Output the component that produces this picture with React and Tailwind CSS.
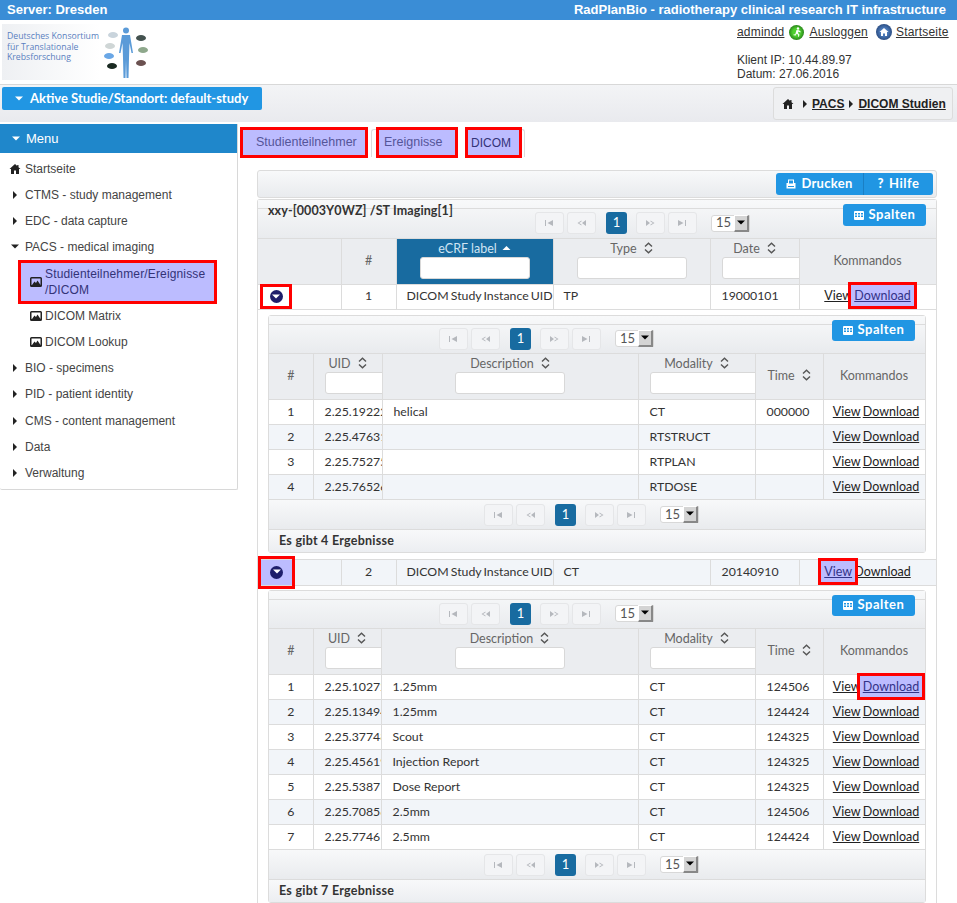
import React from "react";

const HOME = "M6 1 L0.5 6 H2 V11 H5 V7.5 H7 V11 H10 V6 H11.5 L9.5 4.2 V2 H8.2 V3 Z";

function HomeIcon({ className = "" }) {
  return (
    <svg viewBox="0 0 12 12" className={`w-3 h-3 shrink-0 ${className}`} fill="currentColor">
      <path d={HOME} />
    </svg>
  );
}

function TriangleRight() {
  return (
    <svg viewBox="0 0 6 10" className="w-[6px] h-[10px] shrink-0 text-[#222]" fill="currentColor">
      <path d="M1 1 L5 5 L1 9 Z" />
    </svg>
  );
}

function TriangleDown({ className = "text-white" }) {
  return (
    <svg viewBox="0 0 10 6" className={`w-[10px] h-[6px] shrink-0 ${className}`} fill="currentColor">
      <path d="M1 0.5 H9 L5 4.5 Z" />
    </svg>
  );
}

function ImageIcon() {
  return (
    <svg viewBox="0 0 12 10" className="w-[12px] h-[10px] shrink-0 text-[#222]" fill="currentColor">
      <path fillRule="evenodd" d="M1.5 0 H10.5 A1.5 1.5 0 0 1 12 1.5 V8.5 A1.5 1.5 0 0 1 10.5 10 H1.5 A1.5 1.5 0 0 1 0 8.5 V1.5 A1.5 1.5 0 0 1 1.5 0 Z M1.5 1.5 V8 H2 L4.5 4.5 L6 6 L7.5 3.5 L10.5 8 V1.5 Z" />
    </svg>
  );
}

function SortIcon() {
  return (
    <svg viewBox="0 0 9 12" className="inline-block w-[9px] h-[12px] ml-[7px] align-[-1px] text-[#555]" fill="none" stroke="currentColor" strokeWidth="1.4">
      <path d="M1 4.5 L4.5 1.2 L8 4.5 M1 7.5 L4.5 10.8 L8 7.5" />
    </svg>
  );
}

function PrintIcon() {
  return (
    <svg viewBox="0 0 10 10" className="w-[10px] h-[10px] text-white" fill="currentColor">
      <path fillRule="evenodd" d="M2 0.5 H8 V4 H9.5 V9.5 H0.5 V4 H2 Z M3 1.5 V4.5 H7 V1.5 Z M2 7 V8 H8 V7 Z" />
    </svg>
  );
}

function GridIcon() {
  return (
    <svg viewBox="0 0 10 9" className="w-[10px] h-[9px] text-white" fill="currentColor">
      <path fillRule="evenodd" d="M1 0 H9 A1 1 0 0 1 10 1 V8 A1 1 0 0 1 9 9 H1 A1 1 0 0 1 0 8 V1 A1 1 0 0 1 1 0 Z M1 2 V3.5 H3 V2 Z M4 2 V3.5 H6 V2 Z M7 2 V3.5 H9 V2 Z M1 4.5 V6 H3 V4.5 Z M4 4.5 V6 H6 V4.5 Z M7 4.5 V6 H9 V4.5 Z" />
    </svg>
  );
}

function PagerGlyph({ type }) {
  const paths = {
    first: "M1 2 H2 V8 H1 Z M9 2 V8 L3.5 5 Z",
    prev: "M10 2 V8 L6 5 Z M5.5 2.5 L1.5 5 L5.5 7.5 V6.6 L3 5 L5.5 3.4 Z",
    next: "M1 2 V8 L5 5 Z M5.5 2.5 L9.5 5 L5.5 7.5 V6.6 L8 5 L5.5 3.4 Z",
    last: "M1 2 V8 L6.5 5 Z M8 2 H9 V8 H8 Z",
  };
  return (
    <svg viewBox="0 0 11 10" className="w-[11px] h-[10px] text-[#b5b8bd]" fill="currentColor">
      <path d={paths[type]} />
    </svg>
  );
}

function Logo() {
  const blobs = [
    [113, 35, "#c9d4dc"],
    [141, 38, "#43524f"],
    [110, 46, "#cfd6d6"],
    [143, 50, "#8ea88c"],
    [109, 56, "#6aa7e6"],
    [141, 63, "#6b5150"],
    [112, 66, "#1a2a22"],
  ];
  return (
    <div className="relative w-[160px] h-[56px] ml-[2px] mt-[4px]">
      <div className="w-[98px] h-[56px] bg-gradient-to-r from-[#eef0f3] to-white pl-[5px] pt-[7px] text-[8.7px] leading-[10.5px] whitespace-nowrap text-[#5a7fc0] font-['Open_Sans',sans-serif]">
        <p>Deutsches Konsortium</p>
        <p>für Translationale</p>
        <p>Krebsforschung</p>
      </div>
      <svg viewBox="100 24 60 56" className="absolute left-[98px] top-0 w-[60px] h-[56px]">
        {blobs.map(([cx, cy, c]) => (
          <ellipse key={cx + "-" + cy} cx={cx} cy={cy} rx="5" ry="3" fill={c} />
        ))}
        <circle cx="126" cy="30.5" r="3" fill="#5b9bd8" />
        <path d="M122 35 H130 L133 53 H131.5 L129.5 43 L129 58 L128.5 78 H126.5 L126 60 L125.5 78 H123.5 L123 58 L122.5 43 L120.5 53 H119 Z" fill="#5b9bd8" />
      </svg>
    </div>
  );
}

function PagerBtn({ type }) {
  return (
    <span className="w-[29px] h-[22px] mr-[3px] flex items-center justify-center rounded-[3px] border border-[#e5e6e8] bg-[#f3f4f6]">
      <PagerGlyph type={type} />
    </span>
  );
}

function Pager({ className = "" }) {
  return (
    <div className={`flex items-center ${className}`}>
      <PagerBtn type="first" />
      <PagerBtn type="prev" />
      <span className="w-[21px] h-[22px] ml-[7px] mr-[9px] flex items-center justify-center rounded-[3px] bg-[#186ba0] text-white text-[13px]">1</span>
      <PagerBtn type="next" />
      <PagerBtn type="last" />
      <span className="ml-[11px] w-[39px] h-[17px] flex items-center bg-white border border-[#d8d8d8] rounded-l-[3px] text-[13px] text-[#555] pl-[4px]">
        <span className="flex-1">15</span>
        <span className="w-[15px] h-[17px] flex items-center justify-center bg-[#d4d4d4] border-r-2 border-b-2 border-[#888] border-t border-l border-t-white border-l-white">
          <TriangleDown className="text-black w-[7px] h-[4px]" />
        </span>
      </span>
    </div>
  );
}

function BlueButton({ icon, children, className = "" }) {
  return (
    <span className={`inline-flex items-center justify-center gap-[5px] rounded-[3px] bg-[#2196e3] text-white font-bold text-[13px] ${className}`}>
      {icon}
      {children}
    </span>
  );
}

function RowLink({ children, mark = false }) {
  return (
    <a
      className={
        mark
          ? "underline text-[12.5px] text-[#333388] bg-[#bcbcff] outline-[3px] outline-solid outline-[#ff0000] px-[3px] -mx-[3px] py-[3px] relative z-10"
          : "underline text-[12.5px] text-[#222]"
      }
    >
      {children}
    </a>
  );
}

const cellBorder = "border-r border-b border-[#dcdcdc]";

function HeadCell({ col }) {
  return (
    <th className={`${cellBorder} ${col.active ? "bg-[#186ba0] text-[#cfe4f3]" : "bg-[#ebedf0] text-[#666]"} font-normal text-[12.5px] p-0 overflow-hidden align-middle`}>
      <div className="leading-[16px] whitespace-nowrap">
        {col.label}
        {col.sort && <SortIcon />}
        {col.active && (
          <svg viewBox="0 0 9 6" className="inline-block w-[9px] h-[6px] ml-[5px] align-[2px] text-white" fill="currentColor">
            <path d="M0.5 5 H8.5 L4.5 1 Z" />
          </svg>
        )}
      </div>
      {col.input && (
        <input
          readOnly
          className={`block w-[110px] h-[22px] mb-[2px] bg-white border border-[#d8d8d8] rounded-[3px] ${col.input === "clip" ? "ml-[11px]" : "mx-auto"}`}
        />
      )}
    </th>
  );
}

function PanelHead({ title, pagerClass, btnClass, rowClass = "h-[38px]" }) {
  return (
    <div className="bg-gradient-to-b from-[#f8f9fa] to-[#e9ebee] border-b border-[#dcdcdc]">
      <div className="h-[9px] border-b border-[#dcdcdc]" />
      <div className={`${rowClass} flex items-start -mt-[10px] relative`}>
        {title && <b className="absolute left-[10px] top-[3px] text-[12.5px] tracking-[0.1px] text-[#333] whitespace-nowrap">{title}</b>}
        <Pager className={pagerClass} />
        <BlueButton icon={<GridIcon />} className={btnClass}>Spalten</BlueButton>
      </div>
    </div>
  );
}

function SubTable({ rows, markRow, uidCol = "w-[69px]", descCol = "w-[256px]" }) {
  return (
    <div className="border border-[#dcdcdc] rounded-[3px]">
      <PanelHead pagerClass="ml-[170px] mt-[13px]" btnClass="ml-auto mr-[10px] mt-[5px] w-[83px] h-[21px] tracking-[0.5px]" />
      <table className="table-fixed border-collapse w-[656px] text-[12.3px] text-[#333]">
        <colgroup>
          <col className="w-[44px]" />
          <col className={uidCol} />
          <col className={descCol} />
          <col className="w-[117px]" />
          <col className="w-[68px]" />
          <col className="w-[102px]" />
        </colgroup>
        <thead>
          <tr className="h-[46px]">
            <HeadCell col={{ label: "#" }} />
            <HeadCell col={{ label: "UID", sort: true, input: "clip" }} />
            <HeadCell col={{ label: "Description", sort: true, input: "center" }} />
            <HeadCell col={{ label: "Modality", sort: true, input: "clip" }} />
            <HeadCell col={{ label: "Time", sort: true }} />
            <HeadCell col={{ label: "Kommandos" }} />
          </tr>
        </thead>
        <tbody>
          {rows.map((r, i) => (
            <tr key={i} className={`h-[25px] ${i % 2 ? "bg-[#f2f5f9]" : "bg-white"}`}>
              <td className={`${cellBorder} text-center`}>{i + 1}</td>
              <td className={`${cellBorder} pl-[11px] overflow-hidden whitespace-nowrap`}>{r[0]}</td>
              <td className={`${cellBorder} pl-[11px]`}>{r[1]}</td>
              <td className={`${cellBorder} pl-[11px]`}>{r[2]}</td>
              <td className={`${cellBorder} pl-[11px]`}>{r[3]}</td>
              <td className={`${cellBorder} pl-[4px] text-center whitespace-nowrap [word-spacing:-1px]`}>
                <RowLink>View</RowLink> <RowLink mark={markRow === i}>Download</RowLink>
              </td>
            </tr>
          ))}
        </tbody>
      </table>
      <div className="h-[30px] bg-gradient-to-b from-[#f8f9fa] to-[#e9ebee] border-b border-[#dcdcdc] flex items-center">
        <Pager className="ml-[215px]" />
      </div>
      <div className="h-[22px] bg-gradient-to-b from-[#f8f9fa] to-[#eceef1] pl-[10px] flex items-center">
        <b className="text-[12.5px] tracking-[0.25px] text-[#333]">Es gibt {rows.length} Ergebnisse</b>
      </div>
    </div>
  );
}

const seriesA = [
  ["2.25.192224", "helical", "CT", "000000"],
  ["2.25.476312", "", "RTSTRUCT", ""],
  ["2.25.752758", "", "RTPLAN", ""],
  ["2.25.765261", "", "RTDOSE", ""],
];

const seriesB = [
  ["2.25.102727", "1.25mm", "CT", "124506"],
  ["2.25.134949", "1.25mm", "CT", "124424"],
  ["2.25.377484", "Scout", "CT", "124325"],
  ["2.25.456194", "Injection Report", "CT", "124325"],
  ["2.25.538712", "Dose Report", "CT", "124325"],
  ["2.25.708561", "2.5mm", "CT", "124506"],
  ["2.25.774612", "2.5mm", "CT", "124424"],
];

const menu = [
  { label: "Startseite", icon: "home" },
  { label: "CTMS - study management", icon: "right" },
  { label: "EDC - data capture", icon: "right" },
  { label: "PACS - medical imaging", icon: "down" },
  { label: "Studienteilnehmer/Ereignisse /DICOM", icon: "img", sub: true, active: true },
  { label: "DICOM Matrix", icon: "img", sub: true },
  { label: "DICOM Lookup", icon: "img", sub: true },
  { label: "BIO - specimens", icon: "right" },
  { label: "PID - patient identity", icon: "right", tall: true },
  { label: "CMS - content management", icon: "right" },
  { label: "Data", icon: "right" },
  { label: "Verwaltung", icon: "right" },
];

function MenuItem({ item }) {
  const icon = {
    home: <HomeIcon className="text-[#222]" />,
    right: <span className="w-3 flex justify-center"><TriangleRight /></span>,
    down: <span className="w-3 flex justify-center"><TriangleDown className="text-[#222] w-[8px] h-[5px]" /></span>,
    img: <ImageIcon />,
  }[item.icon];
  if (item.active) {
    return (
      <div className="ml-[18px] w-[199px] h-[44px] -mb-[1px] border-[3px] border-[#ff0000] bg-[#bcbcff] flex items-center gap-[3px] pl-[9px] text-[#333377] tracking-[0.15px] leading-[16px]">
        <ImageIcon />
        <span>{item.label}</span>
      </div>
    );
  }
  return (
    <div className={`${item.tall ? "h-[27px] pb-[1px]" : "h-[26px]"} flex items-center text-[#444] ${item.sub ? "pl-[30px] gap-[3px]" : "pl-[9px] gap-[4px]"}`}>
      {icon}
      <span>{item.label}</span>
    </div>
  );
}

function Tab({ children, text = "text-[#555599]", className = "" }) {
  return (
    <span className={`h-[31px] flex items-center border-[3px] border-[#ff0000] bg-[#bcbcff] text-[12.5px] ${text} ${className}`}>
      {children}
    </span>
  );
}

export default function App() {
  return (
    <div className="w-[957px] h-[903px] overflow-hidden bg-white font-['Liberation_Sans',Arial,sans-serif] text-[12px]">
      {/* top bar */}
      <div className="h-[20px] bg-[#3a8dd6] text-white font-bold text-[13px] flex items-center justify-between pl-[7px] pr-[11px]">
        <span>Server: Dresden</span>
        <span>RadPlanBio - radiotherapy clinical research IT infrastructure</span>
      </div>

      <div className="h-[65px] flex justify-between border-b border-[#d8d8d8]">
        <Logo />
        <div className="w-[220px] text-[12px] text-[#333]">
          <div className="flex items-center h-[22px] mt-[1px] tracking-[0.2px]">
            <a className="underline">admindd</a>
            <span className="ml-[5px] w-[15px] h-[15px] rounded-full bg-[radial-gradient(circle,#4fd02f_35%,#0d4a0d_100%)] flex items-center justify-center">
              <svg viewBox="0 0 10 10" className="w-[10px] h-[10px] text-white" fill="currentColor">
                <circle cx="6" cy="1.5" r="1.2" />
                <path d="M4.5 3 L7 3.2 L8.8 4.8 L8.2 5.4 L6.6 4.4 L6 6 L7.4 7.4 L7 9.8 L6 9.6 L6.2 7.8 L4.6 6.8 L3.8 8.6 L1.5 8.2 L1.7 7.2 L3.2 7.4 Z" />
              </svg>
            </span>
            <a className="underline ml-[5px]">Ausloggen</a>
            <span className="ml-[8px] w-[16px] h-[16px] rounded-full bg-[radial-gradient(circle,#4a78b8_35%,#142c58_100%)] flex items-center justify-center">
              <svg viewBox="0 0 10 10" className="w-[10px] h-[10px] text-white" fill="currentColor">
                <path d="M5 1 L9.5 5 H8 V9 H6 V6.5 H4 V9 H2 V5 H0.5 Z" />
              </svg>
            </span>
            <a className="underline ml-[4px]">Startseite</a>
          </div>
          <p className="mt-[10px] leading-[14px]">Klient IP: 10.44.89.97</p>
          <p className="leading-[14px]">Datum: 27.06.2016</p>
        </div>
      </div>

      {/* study bar */}
      <div className="h-[37px] bg-gradient-to-b from-[#f3f4f6] to-[#e9eaee] flex justify-between pl-[2px] pr-[4px] pt-[2px] relative">
        <span className="w-[260px] h-[23px] rounded-[2px] bg-[#2196e3] text-white font-['Lato',sans-serif] font-bold text-[13px] whitespace-nowrap flex items-center gap-[6px] pl-[12px]">
          <TriangleDown className="w-[8px] h-[5px]" />
          Aktive Studie/Standort: default-study
        </span>
        <div className="w-[180px] h-[33px] rounded-[3px] border border-[#dcdcdc] bg-[#eff0f2] flex items-center pl-[8px] gap-[4px] font-bold text-[12px] text-[#222] whitespace-nowrap">
          <HomeIcon />
          <span className="w-0" />
          <TriangleRight />
          <a className="underline">PACS</a>
          <TriangleRight />
          <a className="underline">DICOM Studien</a>
        </div>
      </div>

      <div className="flex items-start mt-[2px]">
        {/* sidebar */}
        <aside className="w-[238px] h-[366px] shrink-0 border-r border-b border-[#d8d8d8] rounded-b-[2px] text-[12px]">
          <div className="h-[29px] bg-[#1f87cb] text-white flex items-center gap-[5px] pl-[11px] text-[13px]">
            <TriangleDown className="w-[8px] h-[5px]" />
            Menu
          </div>
          <div className="pt-[3px]">
            {menu.map((m) => (
              <MenuItem key={m.label} item={m} />
            ))}
          </div>
        </aside>

        {/* main */}
        <main className="flex-1 min-w-0 pl-[2px] pt-[3px] font-['Lato',sans-serif]">
          <div className="flex items-center font-['Liberation_Sans',sans-serif]">
            <Tab className="w-[128px] pl-[13px]">Studienteilnehmer</Tab>
            <span className="w-[5px] h-[28px] ml-[3px] border-l border-t border-[#dcdcdc] rounded-tl-[3px]" />
            <Tab className="w-[82px] pl-[5px]">Ereignisse</Tab>
            <span className="w-[7px]" />
            <Tab className="w-[57px] pl-[3px] !text-[12px]" text="text-[#333377]">DICOM</Tab>
            <span className="w-[3px] h-[28px] border-r border-t border-[#dcdcdc] rounded-tr-[3px]" />
          </div>

          <div className="ml-[17px] w-[680px] mt-[12px]">
            <div className="h-[28px] border border-[#dcdcdc] rounded-[3px] bg-gradient-to-b from-[#f8f9fa] to-[#e9ebee] flex justify-end items-center pr-[3px]">
              <BlueButton icon={<PrintIcon />} className="w-[88px] h-[22px] rounded-r-none border-r border-[#1a7fc4] tracking-[0.3px]">Drucken</BlueButton>
              <BlueButton icon={<b className="text-[13px]">?</b>} className="w-[69px] h-[22px] rounded-l-none tracking-[0.5px]">Hilfe</BlueButton>
            </div>

            <div className="mt-[1px] border-x border-t border-[#dcdcdc] rounded-t-[3px]">
              <PanelHead
                title="xxy-[0003Y0WZ] /ST Imaging[1]"
                rowClass="h-[39px]"
                pagerClass="ml-[277px] mt-[13px]"
                btnClass="ml-auto mr-[10px] mt-[5px] w-[83px] h-[22px] tracking-[0.5px]"
              />
              <table className="table-fixed border-collapse w-[678px] text-[12.3px] text-[#333]">
                <colgroup>
                  <col className="w-[83px]" />
                  <col className="w-[55px]" />
                  <col className="w-[157px]" />
                  <col className="w-[157px]" />
                  <col className="w-[89px]" />
                  <col className="w-[137px]" />
                </colgroup>
                <thead>
                  <tr className="h-[45px]">
                    <HeadCell col={{ label: "" }} />
                    <HeadCell col={{ label: "#" }} />
                    <HeadCell col={{ label: "eCRF label", active: true, input: "center" }} />
                    <HeadCell col={{ label: "Type", sort: true, input: "center" }} />
                    <HeadCell col={{ label: "Date", sort: true, input: "clip" }} />
                    <HeadCell col={{ label: "Kommandos" }} />
                  </tr>
                </thead>
                <tbody>
                  <tr className="h-[25px]">
                    <td className={`${cellBorder} pl-[5px]`}>
                      <div className="w-[26px] h-[19px] flex items-center justify-center outline-[3px] outline-solid outline-[#ff0000]">
                        <Expander />
                      </div>
                    </td>
                    <td className={`${cellBorder} text-center`}>1</td>
                    <td className={`${cellBorder} pl-[10px] whitespace-nowrap [word-spacing:-1px]`}>DICOM Study Instance UID</td>
                    <td className={`${cellBorder} pl-[10px]`}>TP</td>
                    <td className={`${cellBorder} pl-[11px]`}>19000101</td>
                    <td className={`${cellBorder} text-center whitespace-nowrap [word-spacing:-1px]`}>
                      <RowLink>View</RowLink> <RowLink mark>Download</RowLink>
                    </td>
                  </tr>
                  <tr className="h-[250px]">
                    <td colSpan={6} className="px-[10px] pt-[5px] pb-[5px] align-top border-b border-[#dcdcdc]">
                      <SubTable rows={seriesA} />
                    </td>
                  </tr>
                  <tr className="h-[25px] bg-[#f2f5f9]">
                    <td className={`${cellBorder} pl-[3px]`}>
                      <div className="w-[31px] h-[27px] -my-[1px] flex items-center justify-center bg-[#bcbcff] outline-[3px] outline-solid outline-[#ff0000]">
                        <Expander />
                      </div>
                    </td>
                    <td className={`${cellBorder} text-center`}>2</td>
                    <td className={`${cellBorder} pl-[10px] whitespace-nowrap [word-spacing:-1px]`}>DICOM Study Instance UID</td>
                    <td className={`${cellBorder} pl-[10px]`}>CT</td>
                    <td className={`${cellBorder} pl-[11px]`}>20140910</td>
                    <td className={`${cellBorder} text-center whitespace-nowrap [word-spacing:-1px]`}>
                      <RowLink mark>View</RowLink> <RowLink>Download</RowLink>
                    </td>
                  </tr>
                  <tr>
                    <td colSpan={6} className="px-[10px] pt-[4px] align-top">
                      <SubTable rows={seriesB} markRow={0} uidCol="w-[68px]" descCol="w-[257px]" />
                    </td>
                  </tr>
                </tbody>
              </table>
            </div>
          </div>
        </main>
      </div>
    </div>
  );
}

function Expander() {
  return (
    <span className="w-[13px] h-[13px] rounded-full bg-[#1d1d6b] flex items-center justify-center">
      <TriangleDown className="text-white w-[7px] h-[4px]" />
    </span>
  );
}
